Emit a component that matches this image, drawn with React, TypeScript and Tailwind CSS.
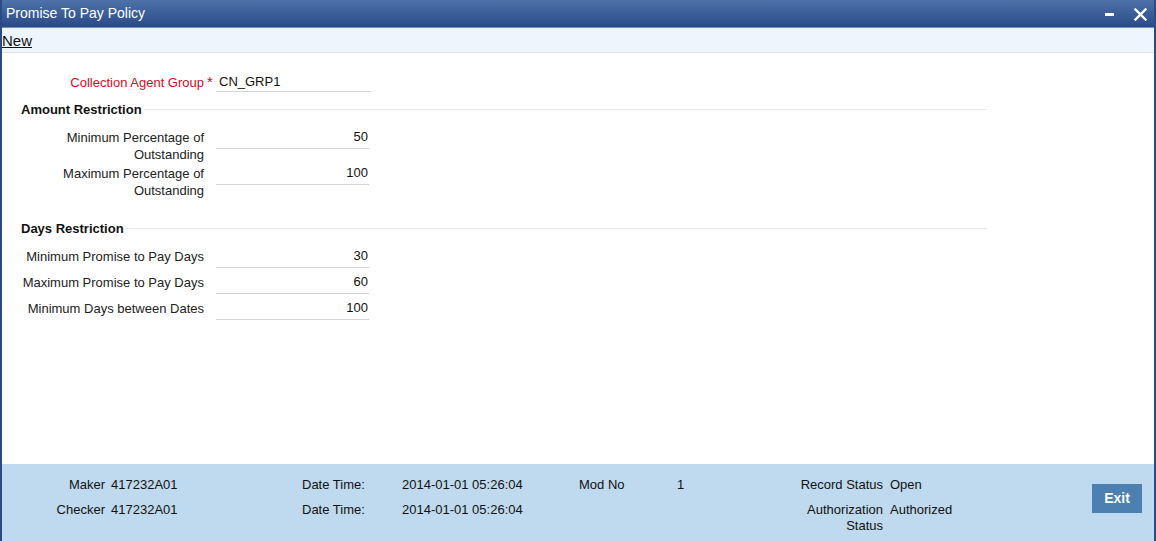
import React from "react";

const font = { fontFamily: '"Liberation Sans", Arial, sans-serif' };

function Field({ label, value, required }: { label: React.ReactNode; value: string; required?: boolean }) {
  return (
    <div className="flex items-start min-h-[26px]">
      <div className={`w-[190px] ${required ? "pt-[4px]" : "pt-[2px]"} text-right leading-[17px] text-[13px] ${required ? "text-[#d40b1f]" : "text-[#222]"}`}>{label}</div>
      {required ? (
        <div className="w-[12px] pt-[3px] text-center text-[15px] leading-[17px] text-[#d40b1f]">*</div>
      ) : (
        <div className="w-[12px]" />
      )}
      <div className={`h-[22px] ${required ? "w-[155px] text-left pl-[3px] pt-[2px]" : "w-[153px] text-right pr-[1px]"} border-b border-[#d4d4d4] text-[13px] leading-[20px] text-[#111]`}>
        {value}
      </div>
    </div>
  );
}

function Heading({ text }: { text: string }) {
  return (
    <div className="flex items-center h-[17px] ml-[19px] w-[966px] mb-[9px]">
      <span className="font-bold text-[13px] text-[#111] pr-[2px]">{text}</span>
      <div className="flex-1 h-px bg-[#e8e8e8]" />
    </div>
  );
}

export default function App() {
  return (
    <div style={font} className="w-[1156px] h-[541px] overflow-hidden flex flex-col bg-white border-x-2 border-[#2b4b85]">
      <div className="h-[28px] shrink-0 flex items-center bg-gradient-to-b from-[#4d72aa] to-[#2a4a87] text-white border-b border-[#6d8fbf]">
        <span className="ml-[4px] text-[14px] leading-none -mt-[2px]">Promise To Pay Policy</span>
        <div className="ml-auto flex items-center mr-[7px]">
          <div className="w-[9px] h-[3px] bg-white mr-[20px] mt-[1px]" />
          <svg width="13" height="13" viewBox="0 0 13 13" className="mt-[1px]">
            <path d="M1.5 1.5 L11.5 11.5 M11.5 1.5 L1.5 11.5" stroke="white" strokeWidth="2.4" strokeLinecap="square" />
          </svg>
        </div>
      </div>
      <div className="h-[25px] shrink-0 bg-[#eef5fd] border-b border-[#dfe4ea] flex items-center">
        <span className="text-[15px] text-[#111] underline leading-none">New</span>
      </div>
      <div className="flex-1 pt-[17px]">
        <div className="ml-[12px]">
          <Field label="Collection Agent Group" value="CN_GRP1" required />
        </div>
        <div className="mt-[5px]" />
        <Heading text="Amount Restriction" />
        <div className="ml-[12px]">
          <Field label={<>Minimum Percentage of<br />Outstanding</>} value="50" />
          <Field label={<>Maximum Percentage of<br />Outstanding</>} value="100" />
        </div>
        <div className="mt-[21px]" />
        <Heading text="Days Restriction" />
        <div className="ml-[12px]">
          <Field label="Minimum Promise to Pay Days" value="30" />
          <Field label="Maximum Promise to Pay Days" value="60" />
          <Field label="Minimum Days between Dates" value="100" />
        </div>
      </div>
      <div className="h-[77px] shrink-0 bg-[#bfdaee] flex text-[13px] text-[#111]">
        <div className="pt-[13px] leading-[16px]">
          <div className="flex h-[25px]">
            <div className="w-[103px] text-right">Maker</div>
            <div className="w-[197px] pl-[6px]">417232A01</div>
            <div className="w-[100px]">Date Time:</div>
            <div className="w-[177px]">2014-01-01 05:26:04</div>
            <div className="w-[98px]">Mod No</div>
            <div className="w-[106px]">1</div>
            <div className="w-[100px] text-right">Record Status</div>
            <div className="pl-[7px]">Open</div>
          </div>
          <div className="flex">
            <div className="w-[103px] text-right">Checker</div>
            <div className="w-[197px] pl-[6px]">417232A01</div>
            <div className="w-[100px]">Date Time:</div>
            <div className="w-[177px]">2014-01-01 05:26:04</div>
            <div className="w-[98px]" />
            <div className="w-[106px]" />
            <div className="w-[100px] text-right">Authorization<br />Status</div>
            <div className="pl-[7px]">Authorized</div>
          </div>
        </div>
        <div className="ml-auto mr-[12px] mt-[20px]">
          <div className="w-[50px] h-[29px] bg-[#4b80b1] text-white font-bold text-[14px] flex items-center justify-center">Exit</div>
        </div>
      </div>
    </div>
  );
}
